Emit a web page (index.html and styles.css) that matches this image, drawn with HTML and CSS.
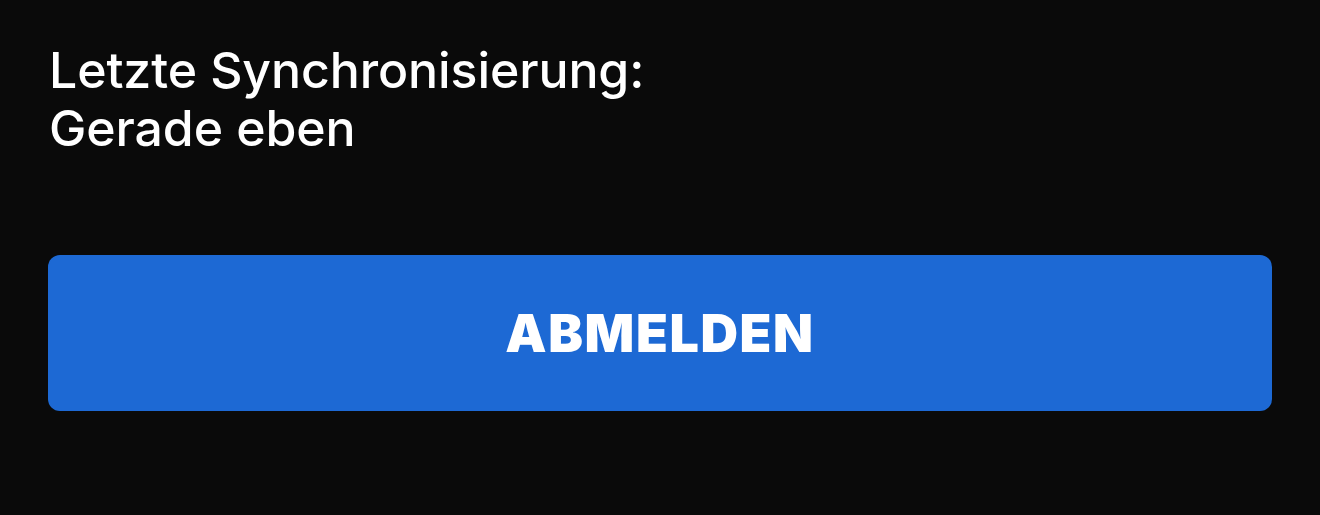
FILE: index.html
```html
<!DOCTYPE html>
<html lang="de">
<head>
<meta charset="utf-8">
<link rel="stylesheet" href="styles.css">
</head>
<body>
<main class="page">
  <p class="sync">Letzte Synchronisierung:<br>Gerade eben</p>
  <button class="logout">ABMELDEN</button>
</main>
</body>
</html>
```
FILE: styles.css
```css
html, body {
  margin: 0;
  padding: 0;
  background: #0a0a0a;
  height: 100%;
}
.page {
  display: flex;
  flex-direction: column;
  padding: 41px 48px 0 48px;
}
.sync {
  margin: 0;
  padding-left: 1px;
  color: #ffffff;
  font-family: Inter, "Liberation Sans", sans-serif;
  font-weight: 500;
  font-size: 50px;
  line-height: 58px;
  letter-spacing: -0.1px;
}
.logout {
  margin-top: 98px;
  height: 156px;
  border: none;
  border-radius: 12px;
  background: #1d69d4;
  color: #ffffff;
  font-family: Inter, "Liberation Sans", sans-serif;
  font-weight: 900;
  font-size: 52px;
  letter-spacing: 1.6px;
  cursor: pointer;
}
```
